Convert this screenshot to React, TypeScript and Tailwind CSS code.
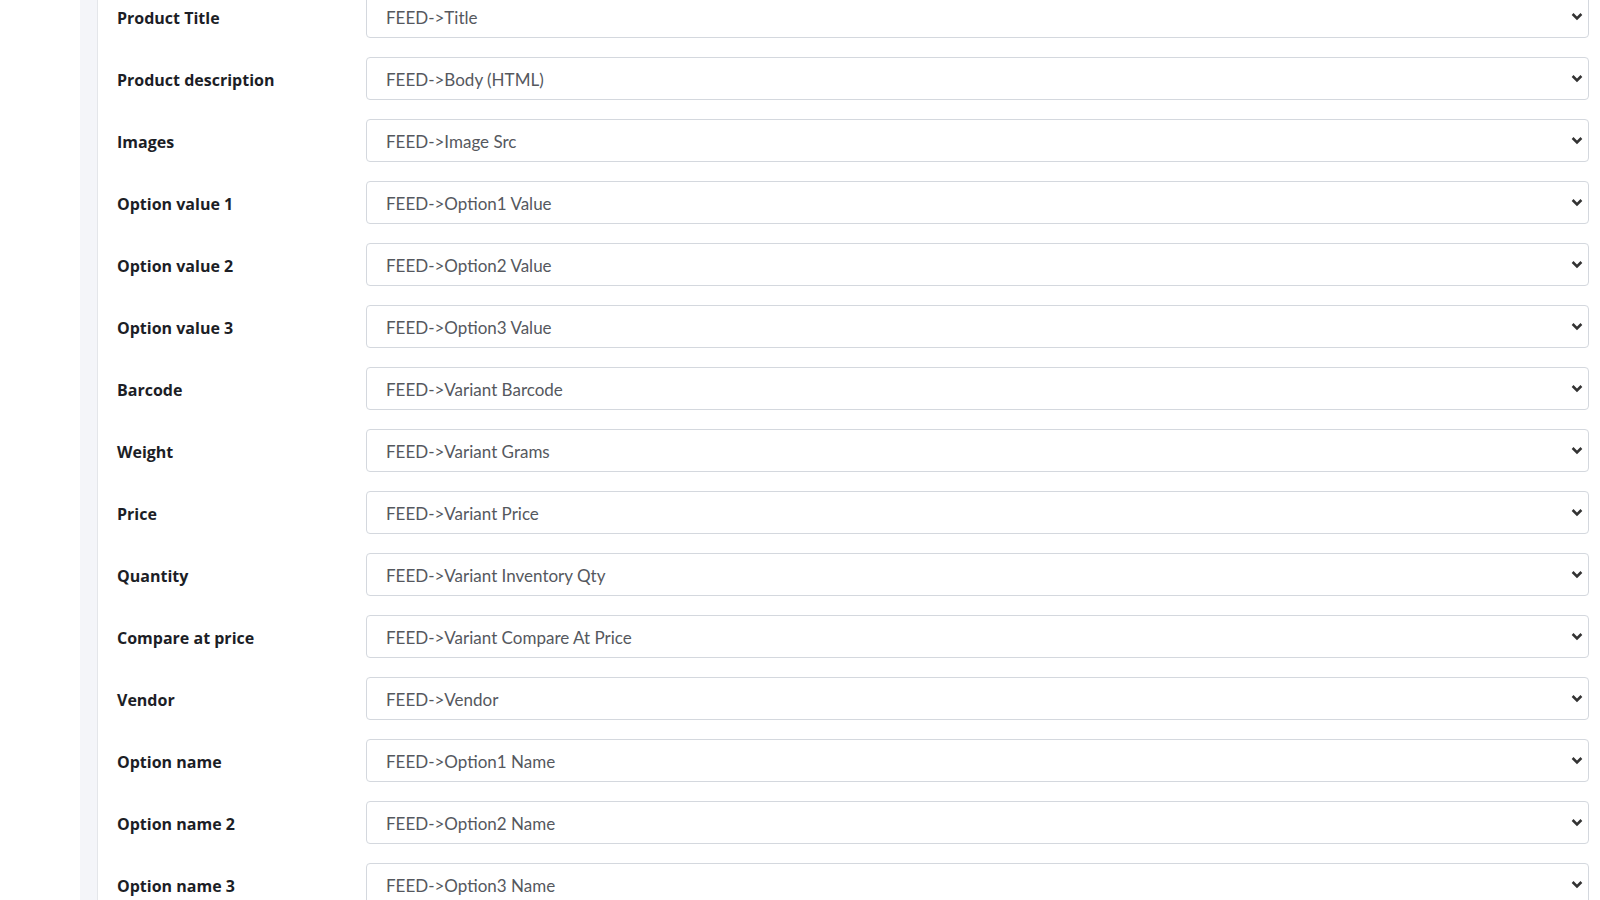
import React from 'react';

const fields: [string, string][] = [
  ['Product Title', 'FEED->Title'],
  ['Product description', 'FEED->Body (HTML)'],
  ['Images', 'FEED->Image Src'],
  ['Option value 1', 'FEED->Option1 Value'],
  ['Option value 2', 'FEED->Option2 Value'],
  ['Option value 3', 'FEED->Option3 Value'],
  ['Barcode', 'FEED->Variant Barcode'],
  ['Weight', 'FEED->Variant Grams'],
  ['Price', 'FEED->Variant Price'],
  ['Quantity', 'FEED->Variant Inventory Qty'],
  ['Compare at price', 'FEED->Variant Compare At Price'],
  ['Vendor', 'FEED->Vendor'],
  ['Option name', 'FEED->Option1 Name'],
  ['Option name 2', 'FEED->Option2 Name'],
  ['Option name 3', 'FEED->Option3 Name'],
];

const Chevron = () => (
  <svg width="12" height="9" viewBox="0 0 12 9" className="text-[#333]">
    <path d="M1.6 2 L6 6.4 L10.4 2" fill="none" stroke="currentColor" strokeWidth="2.6" />
  </svg>
);

export default function App() {
  return (
    <div className="flex h-[900px] overflow-hidden bg-white" style={{ fontFamily: 'Lato, "Open Sans", sans-serif' }}>
      <div className="w-[80px] shrink-0 bg-white" />
      <div className="w-[18px] shrink-0 border-r border-[#e4e6ea] bg-[#f4f5f9]" />
      <div className="flex-1 pl-[19px] pr-[11px]">
        <div className="-mt-[5px] flex flex-col gap-[19px]">
          {fields.map(([label, value]) => (
            <div key={label} className="flex items-center">
              <label className="w-[249px] shrink-0 pt-[2px] font-['Open_Sans',sans-serif] text-[16px] font-bold text-[#1c1e26]">
                {label}
              </label>
              <div className="flex h-[43px] flex-1 items-center justify-between rounded-[4px] border border-[#d4d8de] bg-white pl-[19px] pr-[5px]">
                <span className="pt-[2px] text-[17px] text-[#55585e]">{value}</span>
                <Chevron />
              </div>
            </div>
          ))}
        </div>
      </div>
    </div>
  );
}
